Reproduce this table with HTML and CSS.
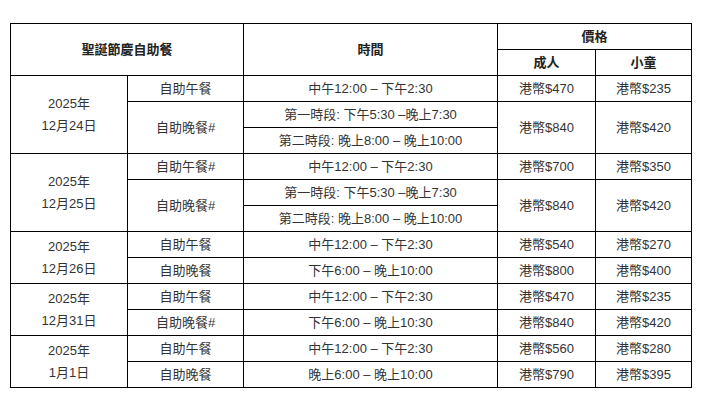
FILE: index.html
```html
<!DOCTYPE html>
<html lang="zh-Hant">
<head>
<meta charset="utf-8">
<link rel="stylesheet" href="styles.css">
</head>
<body>
<div class="wrap">
<table class="buffet">
  <colgroup>
    <col class="c1"><col class="c2"><col class="c3"><col class="c4"><col class="c5">
  </colgroup>
  <thead>
    <tr><th colspan="2" rowspan="2">聖誕節慶自助餐</th><th rowspan="2">時間</th><th colspan="2">價格</th></tr>
    <tr><th>成人</th><th>小童</th></tr>
  </thead>
  <tbody>
    <tr><td rowspan="3" class="date">2025年<br>12月24日</td><td>自助午餐</td><td>中午12:00 – 下午2:30</td><td>港幣$470</td><td>港幣$235</td></tr>
    <tr><td rowspan="2">自助晚餐#</td><td>第一時段: 下午5:30 –晚上7:30</td><td rowspan="2">港幣$840</td><td rowspan="2">港幣$420</td></tr>
    <tr><td>第二時段: 晚上8:00 – 晚上10:00</td></tr>
    <tr><td rowspan="3" class="date">2025年<br>12月25日</td><td>自助午餐#</td><td>中午12:00 – 下午2:30</td><td>港幣$700</td><td>港幣$350</td></tr>
    <tr><td rowspan="2">自助晚餐#</td><td>第一時段: 下午5:30 –晚上7:30</td><td rowspan="2">港幣$840</td><td rowspan="2">港幣$420</td></tr>
    <tr><td>第二時段: 晚上8:00 – 晚上10:00</td></tr>
    <tr><td rowspan="2" class="date">2025年<br>12月26日</td><td>自助午餐</td><td>中午12:00 – 下午2:30</td><td>港幣$540</td><td>港幣$270</td></tr>
    <tr><td>自助晚餐</td><td>下午6:00 – 晚上10:00</td><td>港幣$800</td><td>港幣$400</td></tr>
    <tr><td rowspan="2" class="date">2025年<br>12月31日</td><td>自助午餐</td><td>中午12:00 – 下午2:30</td><td>港幣$470</td><td>港幣$235</td></tr>
    <tr><td>自助晚餐#</td><td>下午6:00 – 晚上10:30</td><td>港幣$840</td><td>港幣$420</td></tr>
    <tr><td rowspan="2" class="date">2025年<br>1月1日</td><td>自助午餐</td><td>中午12:00 – 下午2:30</td><td>港幣$560</td><td>港幣$280</td></tr>
    <tr><td>自助晚餐</td><td>晚上6:00 – 晚上10:00</td><td>港幣$790</td><td>港幣$395</td></tr>
  </tbody>
</table>
</div>
</body>
</html>
```
FILE: styles.css
```css
html, body {
  margin: 0;
  padding: 0;
  background: #fff;
}
.wrap {
  padding: 23px 10px;
}
.buffet {
  border-collapse: collapse;
  table-layout: fixed;
  width: 681px;
  font-family: "Liberation Sans", "Noto Sans CJK TC", Arial, sans-serif;
  font-size: 13px;
  color: #333;
}
.c1 { width: 117px; }
.c2 { width: 116px; }
.c3 { width: 254px; }
.c4 { width: 98px; }
.c5 { width: 96px; }
.buffet th,
.buffet td {
  border: 1px solid #000;
  padding: 0;
  height: 25px;
  text-align: center;
  vertical-align: middle;
  line-height: 16px;
}
.buffet th {
  font-weight: bold;
  color: #222;
}
.buffet td.date {
  line-height: 22px;
}
```
